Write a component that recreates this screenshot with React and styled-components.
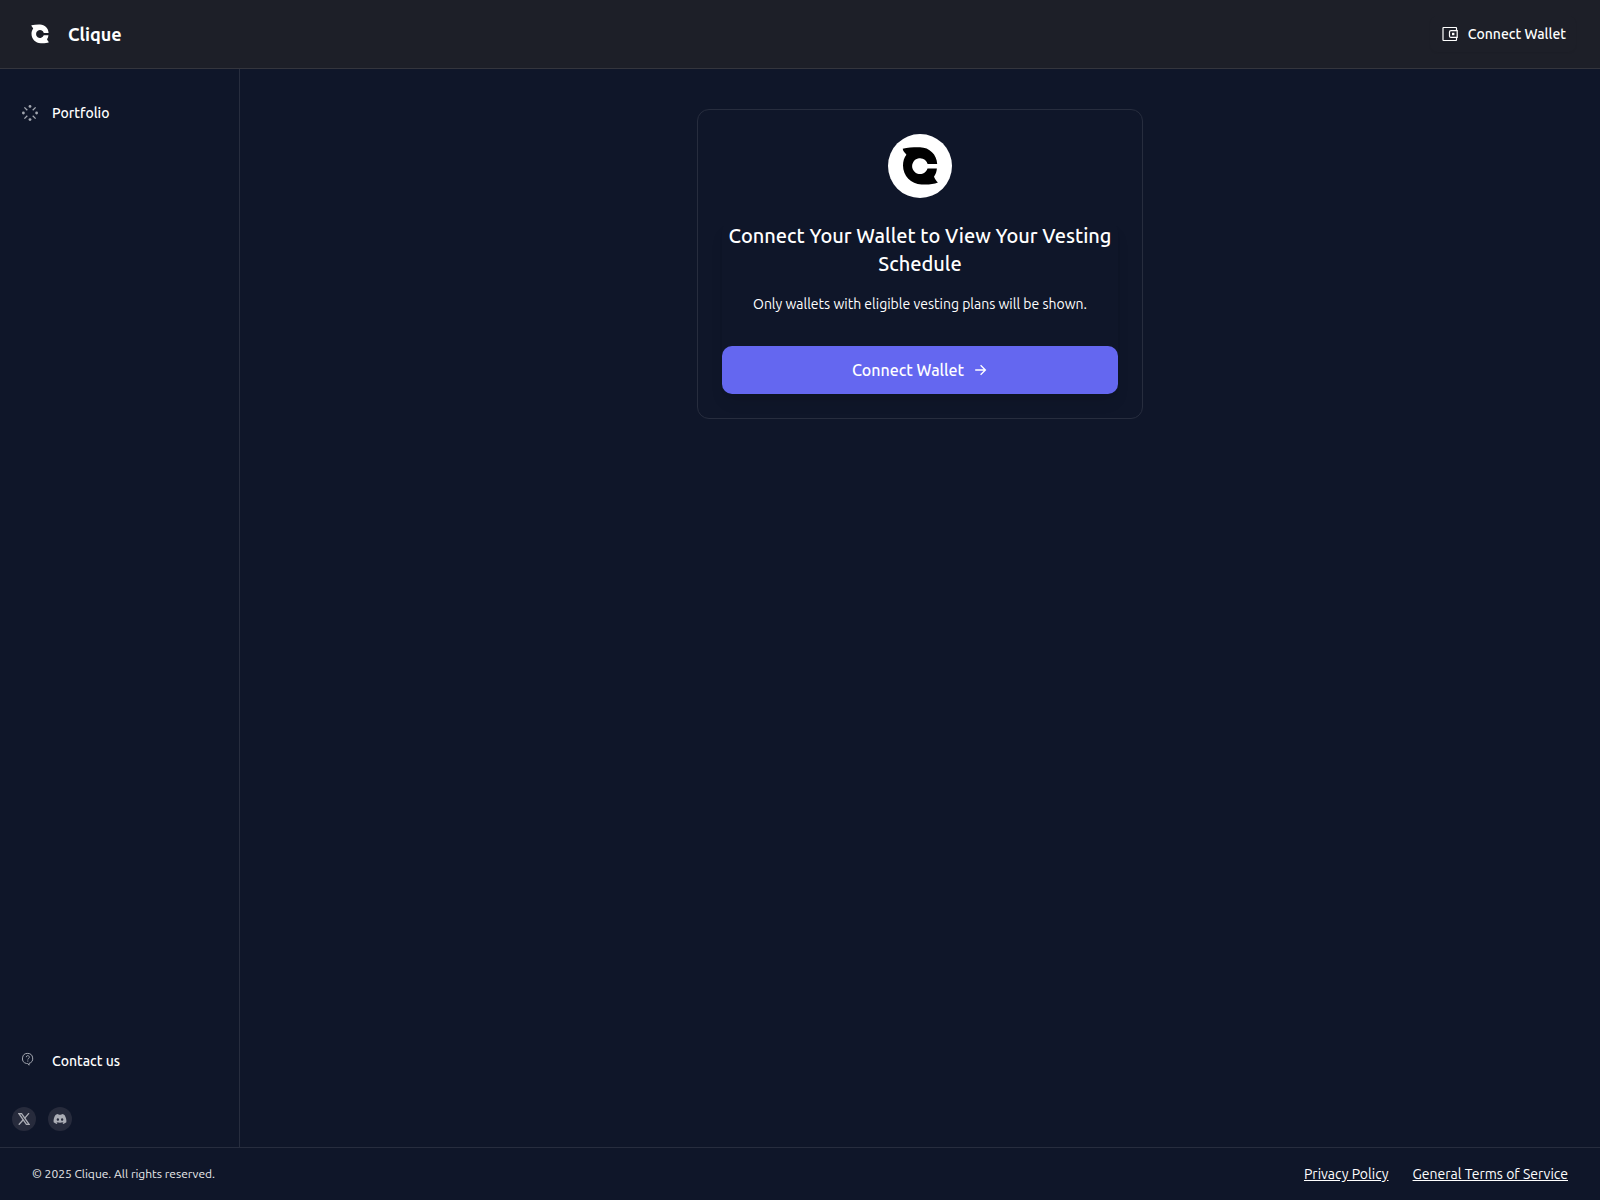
import React from "react";
import styled, { createGlobalStyle } from "styled-components";
import { FaDiscord } from "react-icons/fa6";

const App = () => {
  return (
    <Page>
      <GlobalStyle />
      <Header>
        <Brand>
          <Mark size={32} color="#fff" />
          <BrandName>Clique</BrandName>
        </Brand>
        <WalletButton>
          <WalletIcon />
          Connect Wallet
        </WalletButton>
      </Header>
      <Body>
        <Sidebar>
          <NavItem>
            <IconSlot>
              <PortfolioIcon />
            </IconSlot>
            Portfolio
          </NavItem>
          <SidebarBottom>
            <NavItem>
              <IconSlot>
                <ContactIcon />
              </IconSlot>
              Contact us
            </NavItem>
            <Socials>
              <SocialLink aria-label="X">
                <XIcon />
              </SocialLink>
              <SocialLink aria-label="Discord">
                <FaDiscord size="14px" />
              </SocialLink>
            </Socials>
          </SidebarBottom>
        </Sidebar>
        <Main>
          <Card>
            <LogoCircle>
              <Mark size={64} color="#000" />
            </LogoCircle>
            <CardContent>
              <Title>Connect Your Wallet to View Your Vesting Schedule</Title>
              <Subtitle>
                Only wallets with eligible vesting plans will be shown.
              </Subtitle>
              <PrimaryButton>
                Connect Wallet
                <ArrowIcon />
              </PrimaryButton>
            </CardContent>
          </Card>
        </Main>
      </Body>
      <Footer>
        <Copyright>© 2025 Clique. All rights reserved.</Copyright>
        <FooterLinks>
          <FooterLink>Privacy Policy</FooterLink>
          <FooterLink>General Terms of Service</FooterLink>
        </FooterLinks>
      </Footer>
    </Page>
  );
};

export default App;

const Mark = ({ size, color }) => (
  <svg width={size} height={size} viewBox="0 0 64 64" fill={color}>
    <path d="M14.7 14.7C20 13.4 26 13.1 32 13.2C41.5 13.4 48.8 20.5 49.2 30H39.6A7.9 7.9 0 1 0 39.5 34.6H48.9C48.6 37.8 47.7 40.5 46 42.7C46.8 44.9 48.2 46.6 49.9 48.6C45.5 50.5 39.5 50.8 33.5 50.5C23 50 15 42 15 31.5C15 27.3 16.2 23.6 18.4 20.8C17.6 19.2 15 17.5 14.7 14.7Z" />
  </svg>
);

const WalletIcon = () => (
  <svg width="16" height="16" viewBox="0 0 16 16" fill="none" stroke="#fff">
    <path
      d="M14.5 4.5V2a.5.5 0 0 0-.5-.5H1.5a.5.5 0 0 0-.5.5v12a.5.5 0 0 0 .5.5H14a.5.5 0 0 0 .5-.5v-2.5"
      strokeWidth="1.2"
    />
    <path
      d="M15.2 4.6H9a1.5 1.5 0 0 0-1.5 1.5v3.8A1.5 1.5 0 0 0 9 11.4h6.2z"
      strokeWidth="1.2"
    />
    <rect x="10" y="6.8" width="2.4" height="2.4" fill="#fff" stroke="none" />
  </svg>
);

const PortfolioIcon = () => (
  <svg width="20" height="20" viewBox="0 0 20 20" fill="#a3a7b0">
    <circle cx="10" cy="3.4" r="1.4" />
    <circle cx="10" cy="16.6" r="1.4" />
    <circle cx="3.4" cy="10" r="1.4" />
    <circle cx="16.6" cy="10" r="1.4" />
    <path
      d="M4.4 4.4L7.3 7.3M12.7 7.3L15.6 4.4M4.4 15.6L7.3 12.7M12.7 12.7L15.6 15.6"
      stroke="#a3a7b0"
      strokeWidth="1.3"
    />
  </svg>
);

const ContactIcon = () => (
  <svg width="20" height="20" viewBox="0 0 20 20" fill="none" stroke="#a3a7b0">
    <path
      d="M7.8 2.4a5.1 5.1 0 0 0-1.2 10.1h1l1.4 1.7v-1.8a5.1 5.1 0 0 0-1.2-10z"
      strokeWidth="1"
    />
    <path
      d="M6.3 6.2a1.5 1.5 0 1 1 2.3 1.2c-.5.3-.8.5-.8 1.1M7.8 9.5v1.1"
      strokeWidth="1"
    />
  </svg>
);

const XIcon = () => (
  <svg width="12" height="12" viewBox="0 0 12 12" fill="none" stroke="#abadb5">
    <path d="M1 .7H3.6L11 11.3H8.4Z" strokeWidth="1.3" />
    <path d="M11 .2L6.8 5.1M5.2 6.8L.8 11.8" strokeWidth="1.3" />
  </svg>
);

const ArrowIcon = () => (
  <svg width="14" height="14" viewBox="0 0 14 14" fill="none" stroke="#fff">
    <path d="M1.2 7H11.1M6.6 2.2L11.4 7L6.6 11.8" strokeWidth="1.3" />
  </svg>
);

const GlobalStyle = createGlobalStyle`
  * {
    box-sizing: border-box;
  }

  body {
    margin: 0;
    background-color: #0f1629;
    color: #fff;
    font-family: "Ubuntu", "Noto Sans", sans-serif;
  }

  svg {
    display: block;
    flex-shrink: 0;
  }
`;

const Page = styled.div`
  height: 100vh;
  display: flex;
  flex-direction: column;
  overflow: hidden;
`;

const Header = styled.header`
  height: 69px;
  padding: 0 24px;
  display: flex;
  align-items: center;
  justify-content: space-between;
  background-color: #1d1f28;
  border-bottom: 1px solid #34353d;
`;

const Brand = styled.div`
  display: flex;
  align-items: center;
  gap: 12px;
`;

const BrandName = styled.span`
  font-size: 18px;
  font-weight: 700;
  line-height: 28px;
`;

const WalletButton = styled.button`
  height: 36px;
  padding: 0 10px 0 12px;
  display: flex;
  align-items: center;
  gap: 10px;
  border: none;
  border-radius: 8px;
  background-color: transparent;
  box-shadow: 0 1px 2px rgba(0, 0, 0, 0.05);
  color: #fff;
  font-family: inherit;
  font-size: 14px;
  font-weight: 500;
  cursor: pointer;
`;

const Body = styled.div`
  flex: 1;
  display: flex;
  min-height: 0;
`;

const Sidebar = styled.aside`
  width: 240px;
  padding: 24px 12px 16px;
  display: flex;
  flex-direction: column;
  justify-content: space-between;
  border-right: 1px solid #272d3e;
`;

const NavItem = styled.a`
  height: 40px;
  padding: 0 8px;
  display: flex;
  align-items: center;
  gap: 12px;
  font-size: 14px;
  font-weight: 500;
  cursor: pointer;
`;

const IconSlot = styled.span`
  width: 20px;
  height: 20px;
`;

const SidebarBottom = styled.div`
  display: flex;
  flex-direction: column;
  gap: 26px;
`;

const Socials = styled.div`
  display: flex;
  gap: 12px;
`;

const SocialLink = styled.a`
  width: 24px;
  height: 24px;
  display: flex;
  align-items: center;
  justify-content: center;
  border-radius: 50%;
  background-color: #272b3c;
  color: #abadb5;
  cursor: pointer;
`;

const Main = styled.main`
  flex: 1;
  padding-top: 40px;
  display: flex;
  align-items: flex-start;
  justify-content: center;
`;

const Card = styled.section`
  width: 446px;
  padding: 24px;
  display: flex;
  flex-direction: column;
  align-items: center;
  gap: 24px;
  border: 1px solid #272d3e;
  border-radius: 12px;
`;

const LogoCircle = styled.div`
  width: 64px;
  height: 64px;
  border-radius: 50%;
  background-color: #fff;
`;

const CardContent = styled.div`
  width: 100%;
  display: flex;
  flex-direction: column;
  text-align: center;
  border-radius: 10px;
  box-shadow: 0 10px 15px -3px rgba(0, 0, 0, 0.1),
    0 4px 6px -4px rgba(0, 0, 0, 0.1);
`;

const Title = styled.h1`
  margin: 0 0 16px;
  font-size: 20px;
  font-weight: 500;
  line-height: 28px;
`;

const Subtitle = styled.p`
  margin: 0 0 32px;
  font-size: 14px;
  font-weight: 400;
  line-height: 20px;
`;

const PrimaryButton = styled.button`
  height: 48px;
  display: flex;
  align-items: center;
  justify-content: center;
  gap: 10px;
  border: none;
  border-radius: 10px;
  background-color: #6467f0;
  color: #fff;
  font-family: inherit;
  font-size: 16px;
  font-weight: 500;
  cursor: pointer;
`;

const Footer = styled.footer`
  height: 53px;
  padding: 0 32px;
  display: flex;
  align-items: center;
  justify-content: space-between;
  border-top: 1px solid #272d3e;
`;

const Copyright = styled.span`
  color: #e9eaec;
  font-size: 12px;
  line-height: 16px;
`;

const FooterLinks = styled.nav`
  display: flex;
  gap: 24px;
`;

const FooterLink = styled.a`
  font-size: 14px;
  text-decoration: underline;
  cursor: pointer;
`;
